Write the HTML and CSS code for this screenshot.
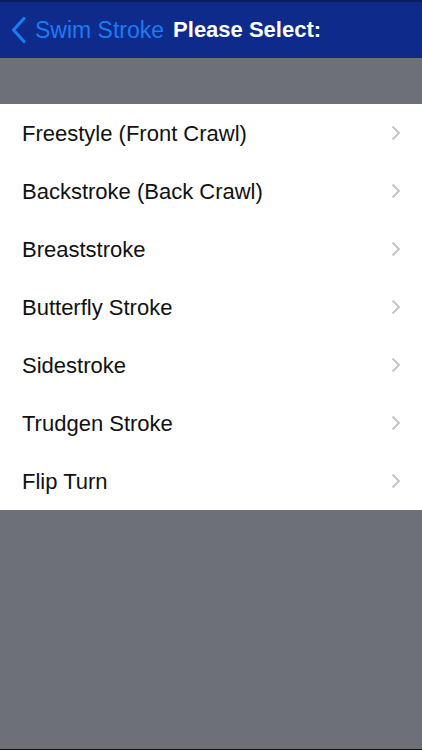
FILE: index.html
```html
<!DOCTYPE html>
<html lang="en">
<head>
  <meta charset="UTF-8" />
  <meta name="viewport" content="width=device-width, initial-scale=1.0" />
  <title>Please Select</title>
  <link rel="stylesheet" href="styles.css">
</head>
<body>
  <div class="screen">
    <!-- nav bar -->
    <header class="navbar">
      <a class="back" href="#">
        <svg class="back-icon" width="17" height="28" viewBox="0 0 17 28">
          <path d="M14 2.5 L3.5 14 L14 25.5" fill="none" stroke="#1a7cf5" stroke-width="3.2" stroke-linecap="round" stroke-linejoin="round"/>
        </svg>
        <span>Swim Stroke</span>
      </a>
      <h1>Please Select:</h1>
    </header>

    <div class="spacer"></div>

    <!-- stroke list -->
    <ul class="list">
      <li><span>Freestyle (Front Crawl)</span><svg class="chev" width="10" height="16" viewBox="0 0 10 16"><path d="M1.5 1.5 L8 8 L1.5 14.5"/></svg></li>
      <li><span>Backstroke (Back Crawl)</span><svg class="chev" width="10" height="16" viewBox="0 0 10 16"><path d="M1.5 1.5 L8 8 L1.5 14.5"/></svg></li>
      <li><span>Breaststroke</span><svg class="chev" width="10" height="16" viewBox="0 0 10 16"><path d="M1.5 1.5 L8 8 L1.5 14.5"/></svg></li>
      <li><span>Butterfly Stroke</span><svg class="chev" width="10" height="16" viewBox="0 0 10 16"><path d="M1.5 1.5 L8 8 L1.5 14.5"/></svg></li>
      <li><span>Sidestroke</span><svg class="chev" width="10" height="16" viewBox="0 0 10 16"><path d="M1.5 1.5 L8 8 L1.5 14.5"/></svg></li>
      <li><span>Trudgen Stroke</span><svg class="chev" width="10" height="16" viewBox="0 0 10 16"><path d="M1.5 1.5 L8 8 L1.5 14.5"/></svg></li>
      <li><span>Flip Turn</span><svg class="chev" width="10" height="16" viewBox="0 0 10 16"><path d="M1.5 1.5 L8 8 L1.5 14.5"/></svg></li>
    </ul>

    <div class="rest"></div>
  </div>
</body>
</html>
```

FILE: styles.css
```css
html,body{margin:0;padding:0;}
body{font-family:"Liberation Sans",Arial,sans-serif;background:#6e7079;}
.screen{width:422px;height:750px;display:flex;flex-direction:column;
  background:#6e7079;border-bottom:1px solid #111;box-sizing:border-box;}

.navbar{height:58px;flex:none;display:flex;align-items:center;gap:9px;
  background:#0e2a8a;border-top:2px solid #0a1d5e;box-sizing:border-box;padding:0 0 0 10px;}
.back{display:flex;align-items:center;gap:8px;text-decoration:none;color:#1a7cf5;font-size:23px;}
.back-icon{display:block;}
.navbar h1{margin:0;font-size:22px;font-weight:bold;color:#fff;}

.spacer{height:46px;flex:none;background:#6e7079;}

.list{list-style:none;margin:0;padding:0;background:#fff;flex:none;}
.list li{height:58px;display:flex;align-items:center;justify-content:space-between;
  padding:2px 21px 0 22px;box-sizing:border-box;font-size:22px;color:#111;}
.chev{display:block;fill:none;stroke:#c4c4c9;stroke-width:2;margin-top:-2px;}

.rest{flex:1;}
```
